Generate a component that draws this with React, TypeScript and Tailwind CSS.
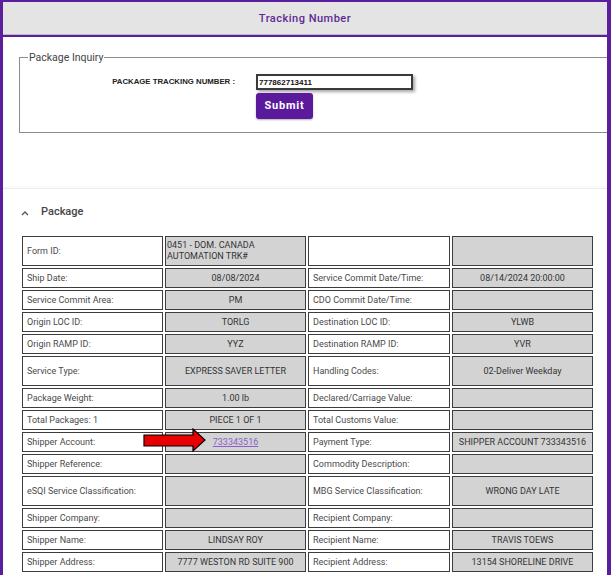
import React from "react";

type Row = {
  l1: string;
  v1?: React.ReactNode;
  l2?: string;
  v2?: string;
  tall?: boolean;
  v1Left?: boolean;
};

const rows: Row[] = [
  { l1: "Form ID:", v1: (<>0451 - DOM. CANADA<br />AUTOMATION TRK#</>), l2: "", v2: "", tall: true, v1Left: true },
  { l1: "Ship Date:", v1: "08/08/2024", l2: "Service Commit Date/Time:", v2: "08/14/2024 20:00:00" },
  { l1: "Service Commit Area:", v1: "PM", l2: "CDO Commit Date/Time:", v2: "" },
  { l1: "Origin LOC ID:", v1: "TORLG", l2: "Destination LOC ID:", v2: "YLWB" },
  { l1: "Origin RAMP ID:", v1: "YYZ", l2: "Destination RAMP ID:", v2: "YVR" },
  { l1: "Service Type:", v1: "EXPRESS SAVER LETTER", l2: "Handling Codes:", v2: "02-Deliver Weekday", tall: true },
  { l1: "Package Weight:", v1: "1.00 lb", l2: "Declared/Carriage Value:", v2: "" },
  { l1: "Total Packages: 1", v1: "PIECE 1 OF 1", l2: "Total Customs Value:", v2: "" },
  {
    l1: "Shipper Account:",
    v1: (<a href="#" className="text-[#8b5fc9] underline">733343516</a>),
    l2: "Payment Type:",
    v2: "SHIPPER ACCOUNT 733343516",
  },
  { l1: "Shipper Reference:", v1: "", l2: "Commodity Description:", v2: "" },
  { l1: "eSQI Service Classification:", v1: "", l2: "MBG Service Classification:", v2: "WRONG DAY LATE", tall: true },
  { l1: "Shipper Company:", v1: "", l2: "Recipient Company:", v2: "" },
  { l1: "Shipper Name:", v1: "LINDSAY ROY", l2: "Recipient Name:", v2: "TRAVIS TOEWS" },
  { l1: "Shipper Address:", v1: "7777 WESTON RD SUITE 900", l2: "Recipient Address:", v2: "13154 SHORELINE DRIVE" },
];

function LabelCell({ text, tall }: { text?: string; tall?: boolean }) {
  return (
    <div
      className={
        (tall ? "h-[30px] " : "h-[20px] ") +
        "flex items-center border border-[#3d3d3d] bg-white px-[4px] text-[9px] leading-[11px] text-[#4a4a4a] whitespace-nowrap"
      }
    >
      {text}
    </div>
  );
}

function ValueCell({ children, tall, left }: { children?: React.ReactNode; tall?: boolean; left?: boolean }) {
  return (
    <div
      className={
        (tall ? "h-[30px] " : "h-[20px] ") +
        (left ? "justify-start text-left pl-[1px] " : "justify-center text-center ") +
        "flex items-center border border-[#3d3d3d] bg-[#d3d3d3] text-[9px] leading-[11px] text-[#333] whitespace-nowrap"
      }
    >
      <span>{children}</span>
    </div>
  );
}

export default function App() {
  return (
    <div className="relative w-[611px] h-[575px] overflow-hidden bg-white font-['Roboto',sans-serif]">
      <div className="h-full overflow-hidden border-l-[3px] border-r-[4px] border-t-2 border-[#5a1f9c]">
        <div className="h-[33px] pt-[3px] bg-[#e4e4e4] border-b border-[#bdbdbd] flex items-center justify-center text-[11px] font-medium tracking-[0.5px] text-[#5e2b97]">
          Tracking Number
        </div>
        <div className="h-[2px] bg-[#5a1f9c]" />

        <fieldset className="mt-[14px] ml-[16px] mr-[-4px] border border-[#8c8c8c] pl-[8px] pt-[10px] pb-[13px]">
          <legend className="px-[1px] text-[10.5px] leading-[13px] text-[#444]">Package Inquiry</legend>
          <div className="flex">
            <div className="w-[207px] h-[16px] flex items-center justify-end font-['Liberation_Sans',sans-serif] font-bold text-[7.8px] text-[#222] whitespace-nowrap">
              PACKAGE TRACKING NUMBER :
            </div>
            <div className="ml-[21px] flex flex-col items-start gap-[3px]">
              <input
                readOnly
                value="777862713411"
                className="w-[157px] h-[16px] border-2 border-[#3a3a3a] bg-white px-[1px] font-['Liberation_Sans',sans-serif] font-bold text-[8px] text-[#111] shadow-[2px_2px_3px_rgba(0,0,0,0.35)] outline-none"
              />
              <button className="w-[57px] h-[26px] rounded-[3px] bg-[#5b1a9b] text-white text-[11px] font-bold tracking-[0.8px] shadow-[0_1px_2px_rgba(0,0,0,0.3)]">
                Submit
              </button>
            </div>
          </div>
        </fieldset>

        <div className="mt-[55px] border-t border-[#ececec] shadow-[0_-1px_2px_rgba(0,0,0,0.04)]">
          <div className="h-[47px] flex items-center pl-[18px] gap-[12px]">
            <svg width="8" height="6" viewBox="0 0 8 6">
              <path d="M1 5 L4 2 L7 5" stroke="#555" strokeWidth="1.3" fill="none" />
            </svg>
            <span className="text-[11px] font-medium text-[#444]">Package</span>
          </div>
          <div className="ml-[19px] grid grid-cols-[141px_141px_142px_141px] gap-x-[2px] gap-y-[2px]">
            {rows.map((r, i) => (
              <React.Fragment key={i}>
                <LabelCell text={r.l1} tall={r.tall} />
                <ValueCell tall={r.tall} left={r.v1Left}>{r.v1}</ValueCell>
                <LabelCell text={r.l2} tall={r.tall} />
                <ValueCell tall={r.tall}>{r.v2}</ValueCell>
              </React.Fragment>
            ))}
          </div>
        </div>
      </div>

      <svg className="absolute left-[143px] top-[428px]" width="64" height="25" viewBox="0 0 64 25">
        <polygon points="1,7 50,7 50,1 62,12 50,23 50,18 1,18" fill="#e60000" stroke="#000" strokeWidth="1.2" strokeLinejoin="miter" />
      </svg>
    </div>
  );
}
